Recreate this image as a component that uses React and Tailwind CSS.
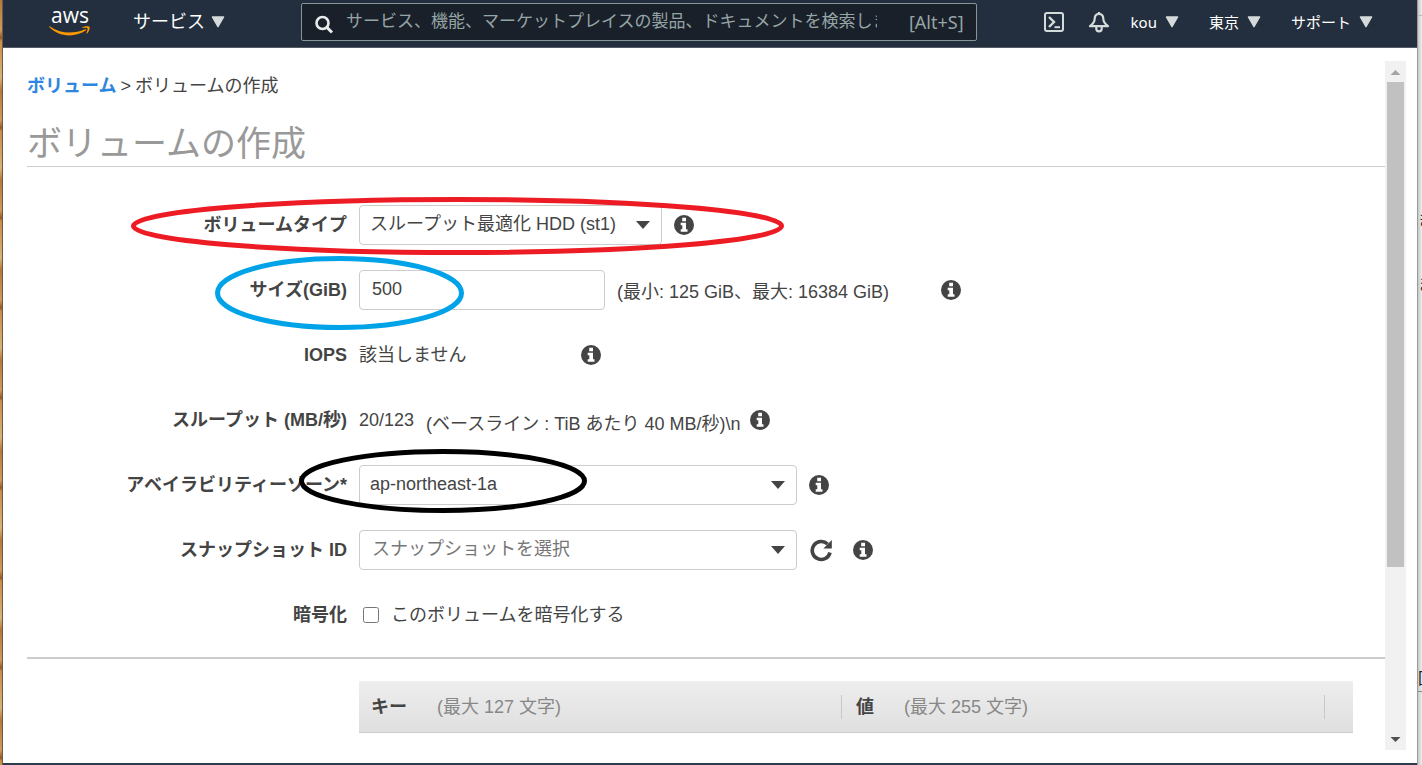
import { useState } from "react";

const NavArrow = () => (
  <svg viewBox="0 0 14 12" className="h-3 w-3.5 shrink-0" aria-hidden="true">
    <path
      d="M1.4 1h11.2L7 10.6z"
      fill="#d5dbdb"
      stroke="#d5dbdb"
      strokeWidth="1.4"
      strokeLinejoin="round"
    />
  </svg>
);

const NavMenu = ({ label }) => (
  <button className="flex items-center gap-2 whitespace-nowrap font-['Noto_Sans','Noto_Sans_CJK_JP',sans-serif] text-[15px] text-white">
    {label}
    <NavArrow />
  </button>
);

const AwsLogo = () => (
  <a href="#home" className="block w-[42px] text-white">
    <span className="block h-[18px] text-center font-['Open_Sans',sans-serif] text-[21px] leading-4 font-medium">
      aws
    </span>
    <svg viewBox="0 0 42 11" className="block h-[11px] w-full" aria-hidden="true">
      <path
        d="M.6 1.2C6.500 5.300 13 7.500 20.500 7.500c5 0 10.700-1.100 15.800-3.300.8-.3 1.400.5.700 1.100C32.500 8.700 26 10.400 20.300 10.400 12.500 10.400 5.400 7.300.3 2c-.4-.5 0-1.100.3-.8z"
        fill="#f90"
      />
      <path
        d="M38.500 3.200c-.6-.8-3.800-.4-5.200-.2-.5.100-.5-.3-.1-.6 2.600-1.800 6.800-1.300 7.300-.7.500.6-.1 4.900-2.500 6.900-.4.300-.8.100-.6-.3.500-1.300 1.700-4.300 1.100-5.100z"
        fill="#f90"
      />
    </svg>
  </a>
);

const Header = () => (
  <header className="flex h-12 items-center border-b border-[#545b64] bg-[#232f3e] pr-11 pb-1 pl-[46px] text-white">
    <AwsLogo />
    <button className="ml-[42px] flex items-center gap-1.5 text-lg whitespace-nowrap">
      サービス
      <NavArrow />
    </button>
    <label className="ml-[76px] flex h-[38px] min-w-0 flex-1 items-center rounded-xs border border-[#879596] bg-[#1a2029] px-3">
      <svg viewBox="0 0 20 20" className="mt-1 h-5 w-5 shrink-0" aria-hidden="true">
        <circle cx="8.500" cy="9" r="6" fill="none" stroke="#eaeded" strokeWidth="2.600" />
        <path d="M13 13.500l5 5" stroke="#eaeded" strokeWidth="3" />
      </svg>
      <input
        type="search"
        aria-label="検索"
        placeholder="サービス、機能、マーケットプレイスの製品、ドキュメントを検索します"
        className="mr-4 ml-3 min-w-0 flex-1 text-[17px] placeholder:text-[#95a5a6] outline-none"
      />
      <span className="font-['Noto_Sans',sans-serif] text-lg text-[#95a5a6]">[Alt+S]</span>
    </label>
    <button aria-label="CloudShell" className="ml-[66px]">
      <svg viewBox="0 0 22 22" className="h-[22px] w-[22px]" fill="none" stroke="#d5dbdb">
        <rect x="2" y="2" width="18" height="18" rx="2" strokeWidth="2" />
        <path d="M6 6l5 5-5 5" strokeWidth="2.400" />
        <path d="M11.500 16.200H17" strokeWidth="2" />
      </svg>
    </button>
    <button aria-label="通知" className="ml-[23px]">
      <svg viewBox="0 0 22 22" className="h-[22px] w-[22px]" fill="none" stroke="#d5dbdb">
        <path
          d="M11 3c-3 0-4.300 2.200-4.300 4.700 0 3.200-1.300 4.800-4.700 7.500h18c-3.400-2.700-4.700-4.300-4.700-7.500C15.300 5.200 14 3 11 3z"
          strokeWidth="2.200"
          strokeLinejoin="round"
        />
        <path d="M11 1v2M8.300 15.500v2.300c0 3.400 5.400 3.400 5.400 0v-2.300" strokeWidth="2.200" />
      </svg>
    </button>
    <div className="ml-[21px] flex items-center gap-[30px]">
      <NavMenu label="kou" />
      <NavMenu label="東京" />
      <NavMenu label="サポート" />
    </div>
  </header>
);

const Info = () => (
  <button type="button" aria-label="情報">
    <svg viewBox="0 0 20 20" className="h-5 w-5">
      <circle cx="10" cy="10" r="10" fill="#444" />
      <path d="M8.200 2.800h3.800v3.400H8.200zM6.700 7.800H12v6.400h1.500v2.500H6.700v-2.500h1.600v-3.900H6.700z" fill="#fff" />
    </svg>
  </button>
);

const Row = ({ label, htmlFor, children }) => (
  <div className="flex h-[65px] items-center gap-3">
    <label htmlFor={htmlFor} className="w-80 shrink-0 text-right font-bold">
      {label}
    </label>
    {children}
  </div>
);

const SelectBox = ({ id, width, tone, children }) => (
  <div className={`relative ${width}`}>
    <select
      id={id}
      className={`h-10 w-full appearance-none rounded border border-[#ccc] bg-white pb-0.5 ${tone}`}
    >
      {children}
    </select>
    <svg
      viewBox="0 0 14 8"
      className="pointer-events-none absolute top-4 right-3 h-2 w-3.5"
      aria-hidden="true"
    >
      <path d="M0 0h14L7 8z" fill="#444" />
    </svg>
  </div>
);

const VolumeForm = () => {
  const [size, setSize] = useState("500");
  const [encrypted, setEncrypted] = useState(false);

  return (
    <form className="pt-[25px] text-lg leading-6 whitespace-nowrap">
      <Row label="ボリュームタイプ" htmlFor="type">
        <SelectBox id="type" width="w-[303px]" tone="pl-2.5">
          <option>スループット最適化 HDD (st1)</option>
        </SelectBox>
        <Info />
      </Row>
      <Row label="サイズ(GiB)" htmlFor="size">
        <input
          id="size"
          value={size}
          onChange={(e) => setSize(e.target.value)}
          className="h-10 w-[246px] rounded border border-[#ccc] px-3"
        />
        <span className="w-[312px] pt-1">(最小: 125 GiB、最大: 16384 GiB)</span>
        <Info />
      </Row>
      <Row label="IOPS">
        <span className="w-[210px]">該当しません</span>
        <Info />
      </Row>
      <Row label="スループット (MB/秒)">
        <span>20/123</span>
        <span className="w-[312px] pt-2">
          (ベースライン : TiB あたり 40 MB/秒)\n
        </span>
        <Info />
      </Row>
      <Row label="アベイラビリティーゾーン*" htmlFor="zone">
        <SelectBox id="zone" width="w-[438px]" tone="pl-2.5">
          <option>ap-northeast-1a</option>
        </SelectBox>
        <Info />
      </Row>
      <Row label="スナップショット ID" htmlFor="snapshot">
        <SelectBox id="snapshot" width="w-[438px]" tone="pl-3 text-[#767676]">
          <option>スナップショットを選択</option>
        </SelectBox>
        <button type="button" aria-label="更新" className="mr-2">
          <svg viewBox="0 0 24 24" className="h-6 w-6">
            <path
              d="M21 14.500A9 9 0 1 1 18.500 6"
              fill="none"
              stroke="#444"
              strokeWidth="3.600"
            />
            <path d="M22.800 2v8.400h-8.400z" fill="#444" />
          </svg>
        </button>
        <Info />
      </Row>
      <Row label="暗号化" htmlFor="encrypt">
        <input
          id="encrypt"
          type="checkbox"
          checked={encrypted}
          onChange={(e) => setEncrypted(e.target.checked)}
          className="ml-1 h-4 w-4"
        />
        <label htmlFor="encrypt">このボリュームを暗号化する</label>
      </Row>
    </form>
  );
};

const TagTable = () => (
  <div className="pt-[22px] pr-8 pl-[332px]">
    <table className="h-[52px] w-full table-fixed border-b border-[#ccc] bg-linear-to-b from-[#eee] to-[#dfdfdf] text-left text-lg leading-6">
      <thead>
        <tr>
          <th className="p-0">
            <div className="border-r border-[#c8c8c8] pl-3">
              キー
              <span className="ml-[30px] font-normal text-[#888]">(最大 127 文字)</span>
            </div>
          </th>
          <th className="p-0">
            <div className="border-r border-[#c8c8c8] pl-3.5">
              値
              <span className="ml-[30px] font-normal text-[#888]">(最大 255 文字)</span>
            </div>
          </th>
          <th className="w-7 p-0" />
        </tr>
      </thead>
    </table>
  </div>
);

const Scrollbar = () => (
  <div className="flex w-[21px] shrink-0 flex-col items-center bg-[#f1f1f1]">
    <svg viewBox="0 0 21 21" className="h-[21px] w-[21px] shrink-0" aria-hidden="true">
      <path d="M5.500 14h10l-5-5z" fill="#a3a3a3" />
    </svg>
    <div className="flex w-[17px] flex-1 flex-col">
      <div className="h-3/4 bg-[#c1c1c1]" />
    </div>
    <svg viewBox="0 0 21 21" className="h-[21px] w-[21px] shrink-0" aria-hidden="true">
      <path d="M5.500 8h10l-5 5z" fill="#505050" />
    </svg>
  </div>
);

// Hand-drawn circles laid over the form
const Marks = () => (
  <svg
    className="pointer-events-none absolute top-0 left-0 h-[765px] w-[1422px]"
    fill="none"
    strokeWidth="5"
    aria-hidden="true"
  >
    <ellipse cx="457.500" cy="226" rx="324" ry="26.500" stroke="#ed1c24" />
    <ellipse cx="339.500" cy="293" rx="122" ry="34.500" stroke="#00a2e8" />
    <ellipse cx="443" cy="481" rx="141.500" ry="29.500" stroke="#000" />
  </svg>
);

export default function App() {
  return (
    <div className="relative flex min-h-screen overflow-hidden font-['Liberation_Sans','Noto_Sans_CJK_JP',sans-serif] text-[17px] leading-6 text-[#444]">
      <div className="w-[3px] shrink-0 border-r border-[#6b5a45] bg-[repeating-linear-gradient(180deg,#b5783a_0,#cf9a5c_30px,#8f5a28_38px,#c98c48_41px,#d9b377_78px,#b5783a_90px)]" />
      <div className="flex min-w-0 flex-1 flex-col border-b-2 border-[#2b3a4d] bg-white">
        <Header />
        <div className="flex flex-1 py-[13px] pr-[11px] pl-6">
          <main className="min-w-0 flex-1">
            <nav className="flex gap-1 pt-[13px] text-lg leading-6">
              <a href="#volumes" className="font-bold text-[#2e86de]">
                ボリューム
              </a>
              <span>&gt;</span>
              <span>ボリュームの作成</span>
            </nav>
            <h1 className="mt-[23px] border-b border-[#ccc] text-[35px] leading-[45px] text-[#999]">
              ボリュームの作成
            </h1>
            <VolumeForm />
            <hr className="mt-2.5 border-t-2 border-[#ccc]" />
            <TagTable />
          </main>
          <Scrollbar />
        </div>
      </div>
      <div
        className="flex w-[5px] shrink-0 flex-col overflow-hidden border-l border-[#999] bg-linear-to-r from-[#c8c8c8] to-[#eee] text-base text-[#222]"
        aria-hidden="true"
      >
        <div className="mb-[193px] h-4 shrink-0 border-b border-[#bbb]" />
        <span className="w-4">き</span>
        <span className="mt-10 w-4">ま</span>
        <span className="mt-[370px] w-4">回</span>
        <div className="border-b border-[#888]" />
      </div>
      <Marks />
    </div>
  );
}
